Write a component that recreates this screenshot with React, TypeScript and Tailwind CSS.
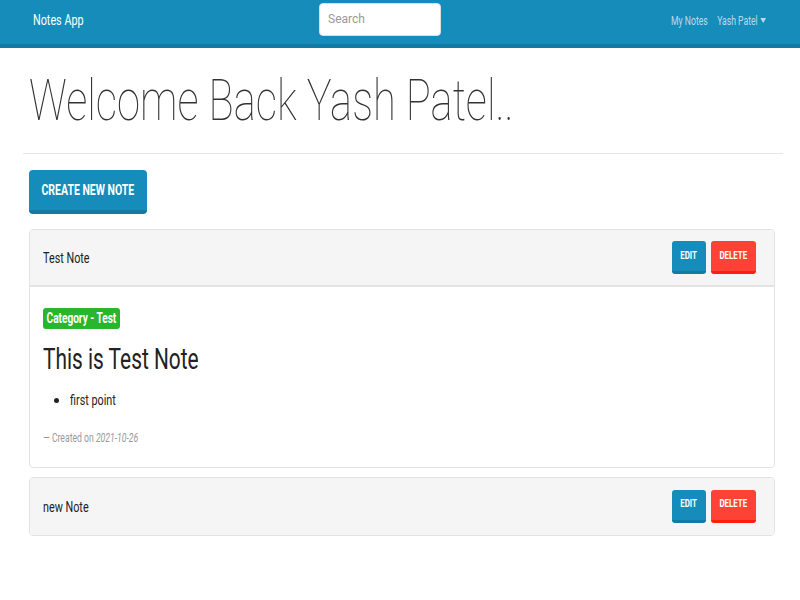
import type { ReactNode } from 'react';

// reference text is set in a narrow face; squeeze Roboto to the same widths
function Sq({ children, className = '' }: { children: ReactNode; className?: string }) {
  return <span className={`inline-block whitespace-nowrap scale-x-[0.72] ${className}`}>{children}</span>;
}

type Note = {
  title: string;
  open?: boolean;
  category?: string;
  heading?: string;
  points?: string[];
  date?: string;
};

const notes: Note[] = [
  {
    title: 'Test Note',
    open: true,
    category: 'Test',
    heading: 'This is Test Note',
    points: ['first point'],
    date: '2021-10-26',
  },
  { title: 'new Note' },
];

function NoteCard({ note }: { note: Note }) {
  return (
    <div className="rounded border border-[#e3e3e3] overflow-hidden">
      <div
        className={`flex items-center justify-between bg-[#f5f5f5] h-[57px] pl-[13px] pr-[18px] ${
          note.open ? 'border-b-2 border-[#e3e3e3]' : ''
        }`}
      >
        <Sq className="origin-left text-[15px] text-[#222] mt-[2px]">{note.title}</Sq>
        <div className="flex gap-[5px]">
          <button className="h-[33px] w-[34px] rounded-[3px] bg-[#158cba] border-b-[3px] border-[#127ba3] text-white text-[11px] font-bold flex items-center justify-center">
            <Sq className="scale-x-[0.68]">EDIT</Sq>
          </button>
          <button className="h-[33px] w-[45px] rounded-[3px] bg-[#ff4136] border-b-[3px] border-[#ff1d0e] text-white text-[11px] font-bold flex items-center justify-center">
            <Sq className="scale-x-[0.68]">DELETE</Sq>
          </button>
        </div>
      </div>
      {note.open && (
        <div className="px-[13px] pt-[21px] pb-[20px]">
          <span className="flex items-center justify-center w-[77px] h-[21px] bg-[#28b62c] text-white text-[14px] font-bold rounded-[3px]">
            <Sq className="scale-x-[0.68]">Category - {note.category}</Sq>
          </span>
          <h2 className="text-[29px] text-[#222] leading-[36px] mt-[12px]">
            <Sq className="origin-left scale-x-[0.7]">{note.heading}</Sq>
          </h2>
          <ul className="list-disc pl-[27px] mt-[12px] text-[15px] text-[#222]">
            {note.points?.map((p) => (
              <li key={p}>
                <Sq className="origin-left">{p}</Sq>
              </li>
            ))}
          </ul>
          <p className="text-[12px] text-[#999] mt-[17px]">
            <Sq className="origin-left">
              — Created on <i>{note.date}</i>
            </Sq>
          </p>
        </div>
      )}
    </div>
  );
}

export default function App() {
  return (
    <div className="min-h-[600px] bg-white font-['Roboto',sans-serif]">
      <nav className="h-[48px] bg-[#158cba] border-b-4 border-[#127ba3] flex items-center pl-[33px] pr-[34px]">
        <span className="w-[286px] -mt-[4px]">
          <Sq className="origin-left text-white text-[15px] scale-x-[0.7]">Notes App</Sq>
        </span>
        <input
          placeholder="Search"
          className="h-[33px] w-[122px] -mt-[6px] bg-white rounded-[4px] border border-[#ddd] px-[8px] text-[12px] placeholder:text-[#999] outline-none"
        />
        <div className="ml-auto -mt-[4px]">
          <Sq className="origin-right text-[12px] text-white/70 scale-x-[0.72]">
            <span className="mr-[13px]">My Notes</span>
            <span>Yash Patel</span>
            <span className="inline-block ml-[4px] mb-[3px] align-middle border-x-[4px] border-x-transparent border-t-[5px] border-t-white/70" />
          </Sq>
        </div>
      </nav>

      <div className="pl-[23px] pr-[17px] pt-[14px]">
        <h1 className="text-[58px] font-thin text-[#333] leading-[76px] pl-[6px]">
          <Sq className="origin-left scale-x-[0.70]">Welcome Back Yash Patel..</Sq>
        </h1>
        <hr className="mt-[15px] border-[#e7e7e7]" />
        <div className="pl-[6px] pr-[8px] pt-[16px]">
          <button className="h-[44px] w-[118px] rounded-[4px] bg-[#158cba] border-b-4 border-[#127ba3] text-white text-[14px] font-bold flex items-center justify-center">
            <Sq className="scale-x-[0.75]">CREATE NEW NOTE</Sq>
          </button>
          <div className="mt-[15px] flex flex-col gap-[9px]">
            {notes.map((n) => (
              <NoteCard key={n.title} note={n} />
            ))}
          </div>
        </div>
      </div>
    </div>
  );
}
